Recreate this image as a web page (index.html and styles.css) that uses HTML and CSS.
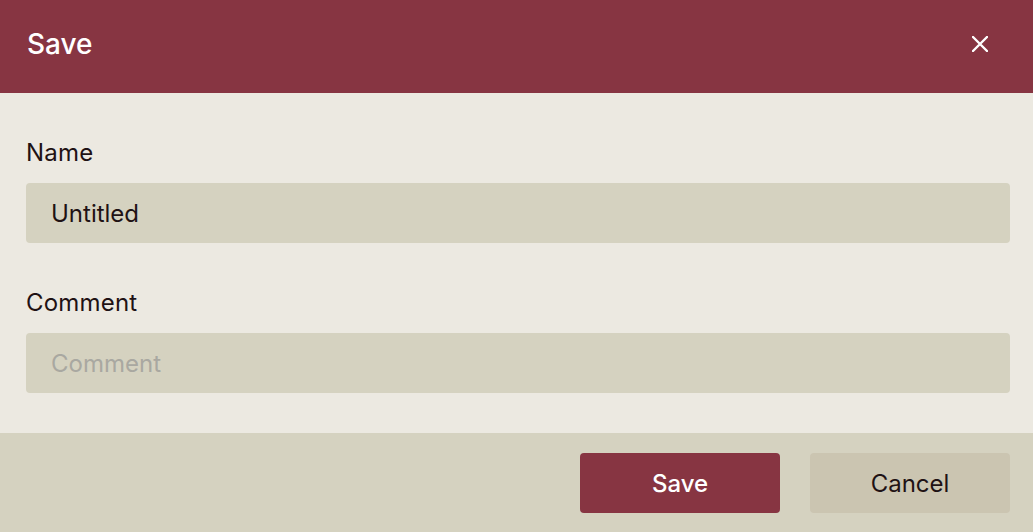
FILE: index.html
```html
<!DOCTYPE html>
<html>
<head>
<meta charset="utf-8">
<link rel="stylesheet" href="styles.css">
</head>
<body>
<div class="dialog">
  <header class="dialog-header">
    <h1 class="dialog-title">Save</h1>
    <button class="close-btn" aria-label="Close">
      <svg width="16" height="16" viewBox="0 0 16 16"><path d="M1 1 L15 15 M15 1 L1 15" stroke="#fff" stroke-width="2.4" stroke-linecap="round" fill="none"/></svg>
    </button>
  </header>
  <main class="dialog-body">
    <label class="field-label">Name</label>
    <input class="field-input" type="text" value="Untitled">
    <label class="field-label second">Comment</label>
    <input class="field-input" type="text" placeholder="Comment">
  </main>
  <footer class="dialog-footer">
    <button class="btn btn-primary">Save</button>
    <button class="btn btn-secondary">Cancel</button>
  </footer>
</div>
</body>
</html>
```
FILE: styles.css
```css
* { box-sizing: border-box; }
html, body { margin: 0; padding: 0; }
body {
  font-family: Inter, "Noto Sans", sans-serif;
  background: #ECE9E1;
  color: #1F1214;
  width: 1033px;
  height: 532px;
  overflow: hidden;
}
.dialog {
  display: flex;
  flex-direction: column;
  height: 532px;
}
.dialog-header {
  height: 93px;
  background: #873542;
  display: flex;
  align-items: center;
  justify-content: space-between;
  padding: 0 33px 6px 27px;
}
.dialog-title {
  margin: 0;
  font-size: 28px;
  font-weight: 500;
  color: #fff;
  line-height: 34px;
}
.close-btn {
  width: 40px;
  height: 40px;
  border: none;
  background: transparent;
  display: flex;
  align-items: center;
  justify-content: center;
  padding: 0;
  cursor: pointer;
}
.dialog-body {
  display: flex;
  flex-direction: column;
  padding: 46px 23px 40px 26px;
  flex: 1;
}
.field-label {
  font-size: 24px;
  line-height: 28px;
  margin-bottom: 16px;
  color: #1F1214;
  letter-spacing: 0.2px;
}
.field-label.second { margin-top: 46px; }
.field-input {
  height: 60px;
  border: none;
  border-radius: 4px;
  background: #D5D2C0;
  padding: 0 25px;
  font-family: inherit;
  font-size: 24px;
  color: #1F1214;
  outline: none;
}
.field-input::placeholder { color: #A9A8A1; }
.dialog-footer {
  background: #D5D2C0;
  display: flex;
  justify-content: flex-end;
  gap: 30px;
  padding: 20px 23px 19px 0;
}
.btn {
  width: 200px;
  height: 60px;
  border: none;
  border-radius: 4px;
  font-family: inherit;
  font-size: 24px;
  font-weight: 500;
}
.btn-primary { background: #873542; color: #fff; }
.btn-secondary { background: #CBC5B1; color: #1F1214; font-weight: 400; }
```
